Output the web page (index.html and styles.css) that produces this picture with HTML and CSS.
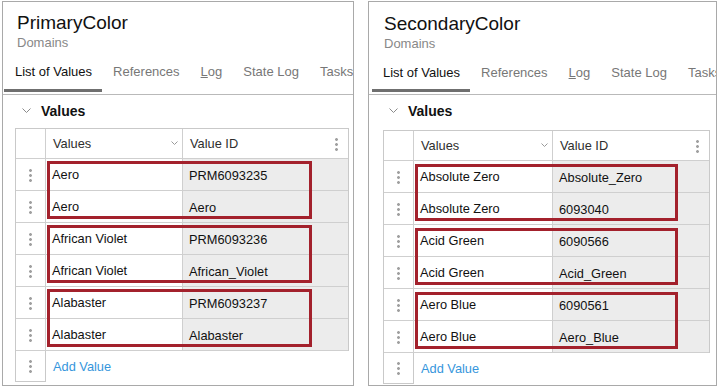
FILE: index.html
```html
<!DOCTYPE html>
<html>

<head>
  <meta charset="utf-8">
  <title>Domains</title>
  <link rel="stylesheet" href="styles.css">
</head>

<body>
  <!-- PrimaryColor domain -->
  <div class="panel primary">
    <div class="head">
      <div class="title">PrimaryColor</div>
      <div class="kind">Domains</div>
    </div>
    <div class="tabs">
      <div class="tab on">List of Values</div>
      <div class="tab">References</div>
      <div class="tab"><u>L</u>og</div>
      <div class="tab">State Log</div>
      <div class="tab">Tasks</div>
    </div>
    <div class="section">
      <svg class="chev" width="9" height="6" viewBox="0 0 9 6"><polyline points="0.5,0.5 4.5,4.5 8.5,0.5" fill="none" stroke="#8a8a8a" stroke-width="1"/></svg>
      <span>Values</span>
    </div>
    <div class="grid">
      <div class="row hdr">
        <div class="handle"></div>
        <div class="cell val">Values <svg class="sort" width="7" height="5" viewBox="0 0 7 5"><polyline points="0.5,0.5 3.5,3.5 6.5,0.5" fill="none" stroke="#9a9a9a" stroke-width="1"/></svg></div>
        <div class="cell idh">Value ID <span class="dots"></span></div>
      </div>
      <div class="group">
        <div class="row">
          <div class="handle"><span class="dots"></span></div>
          <div class="cell val">Aero</div>
          <div class="cell id">PRM6093235</div>
        </div>
        <div class="row">
          <div class="handle"><span class="dots"></span></div>
          <div class="cell val">Aero</div>
          <div class="cell id">Aero</div>
        </div>
        <div class="mark"></div>
      </div>
      <div class="group">
        <div class="row">
          <div class="handle"><span class="dots"></span></div>
          <div class="cell val">African Violet</div>
          <div class="cell id">PRM6093236</div>
        </div>
        <div class="row">
          <div class="handle"><span class="dots"></span></div>
          <div class="cell val">African Violet</div>
          <div class="cell id">African_Violet</div>
        </div>
        <div class="mark"></div>
      </div>
      <div class="group">
        <div class="row">
          <div class="handle"><span class="dots"></span></div>
          <div class="cell val">Alabaster</div>
          <div class="cell id">PRM6093237</div>
        </div>
        <div class="row">
          <div class="handle"><span class="dots"></span></div>
          <div class="cell val">Alabaster</div>
          <div class="cell id">Alabaster</div>
        </div>
        <div class="mark"></div>
      </div>
    </div>
    <div class="add">
      <div class="handle"><span class="dots"></span></div>
      <a class="addlink">Add Value</a>
    </div>
  </div>

  <!-- SecondaryColor domain -->
  <div class="panel secondary">
    <div class="head">
      <div class="title">SecondaryColor</div>
      <div class="kind">Domains</div>
    </div>
    <div class="tabs">
      <div class="tab on">List of Values</div>
      <div class="tab">References</div>
      <div class="tab"><u>L</u>og</div>
      <div class="tab">State Log</div>
      <div class="tab">Tasks</div>
    </div>
    <div class="section">
      <svg class="chev" width="9" height="6" viewBox="0 0 9 6"><polyline points="0.5,0.5 4.5,4.5 8.5,0.5" fill="none" stroke="#8a8a8a" stroke-width="1"/></svg>
      <span>Values</span>
    </div>
    <div class="grid">
      <div class="row hdr">
        <div class="handle"></div>
        <div class="cell val">Values <svg class="sort" width="7" height="5" viewBox="0 0 7 5"><polyline points="0.5,0.5 3.5,3.5 6.5,0.5" fill="none" stroke="#9a9a9a" stroke-width="1"/></svg></div>
        <div class="cell idh">Value ID <span class="dots"></span></div>
      </div>
      <div class="group">
        <div class="row">
          <div class="handle"><span class="dots"></span></div>
          <div class="cell val">Absolute Zero</div>
          <div class="cell id">Absolute_Zero</div>
        </div>
        <div class="row">
          <div class="handle"><span class="dots"></span></div>
          <div class="cell val">Absolute Zero</div>
          <div class="cell id">6093040</div>
        </div>
        <div class="mark"></div>
      </div>
      <div class="group">
        <div class="row">
          <div class="handle"><span class="dots"></span></div>
          <div class="cell val">Acid Green</div>
          <div class="cell id">6090566</div>
        </div>
        <div class="row">
          <div class="handle"><span class="dots"></span></div>
          <div class="cell val">Acid Green</div>
          <div class="cell id">Acid_Green</div>
        </div>
        <div class="mark"></div>
      </div>
      <div class="group">
        <div class="row">
          <div class="handle"><span class="dots"></span></div>
          <div class="cell val">Aero Blue</div>
          <div class="cell id">6090561</div>
        </div>
        <div class="row">
          <div class="handle"><span class="dots"></span></div>
          <div class="cell val">Aero Blue</div>
          <div class="cell id">Aero_Blue</div>
        </div>
        <div class="mark"></div>
      </div>
    </div>
    <div class="add">
      <div class="handle"><span class="dots"></span></div>
      <a class="addlink">Add Value</a>
    </div>
  </div>
</body>

</html>
```

FILE: styles.css
```css
body {
  margin: 1px 0 0 2px;
  display: flex;
  gap: 14px;
  font-family: 'Liberation Sans', Arial, sans-serif;
  background-color: #fff;
  color: #111;
}

/*///////////////////////////////////////////////////////////////////////////*/
.panel {
  box-sizing: border-box;
  width: 352px;
  height: 385px;
  border: 1px solid #a9a9a9;
  display: flex;
  flex-direction: column;
  overflow: hidden;
}

.head {
  padding: 9px 0 0 14px;
}

.title {
  font-size: 19px;
  line-height: 24px;
  color: #111;
}

.kind {
  font-size: 13px;
  line-height: 16px;
  color: #888;
}

.tabs {
  display: flex;
  margin-top: 13px;
  padding: 0 0 2px 1px;
  border-bottom: 1px solid #b9b9b9;
  white-space: nowrap;
  overflow: hidden;
}

.tab {
  flex: none;
  padding: 0 10px 9px 11px;
  font-size: 13px;
  line-height: 16px;
  color: #777;
  border-bottom: 3px solid transparent;
}

.tab u {
  text-decoration-color: #777;
}

.tab.on {
  color: #111;
  border-bottom-color: #6f6f6f;
}

.section {
  display: flex;
  align-items: center;
  padding: 7px 0 0 19px;
  height: 18px;
  font-size: 14px;
  font-weight: bold;
  color: #111;
}

.chev {
  margin-right: 10px;
}

/*///////////////////////////////////////////////////////////////////////////*/
.grid {
  margin: 8px 4px 0 12px;
  border: 1px solid #c9c9c9;
  border-bottom: none;
}

.row {
  box-sizing: border-box;
  display: grid;
  grid-template-columns: 30px 137px 1fr;
  height: 32px;
  border-bottom: 1px solid #cfcfcf;
}

.row.hdr {
  height: 30px;
}

.handle {
  box-sizing: border-box;
  display: flex;
  align-items: center;
  justify-content: center;
  border-right: 1px solid #cfcfcf;
}

.cell {
  display: flex;
  align-items: center;
  padding: 0 6px;
  font-size: 12.8px;
  white-space: nowrap;
  overflow: hidden;
}

.val {
  border-right: 1px solid #cfcfcf;
}

.hdr .cell {
  color: #2e2e2e;
  padding-left: 7px;
}

.sort {
  margin-left: auto;
  margin-right: -2px;
}

.idh {
  justify-content: space-between;
  padding-right: 10px;
}

.id {
  background-color: #ececec;
  padding-top: 2px;
}

.dots {
  display: inline-block;
  width: 3px;
  height: 14px;
  background-image: radial-gradient(circle at center, #a0a0a0 1.2px, transparent 1.6px);
  background-size: 3px 5px;
}

.group {
  position: relative;
}

.mark {
  position: absolute;
  left: 31px;
  top: 2px;
  width: 265px;
  height: 58px;
  box-sizing: border-box;
  border: 3px solid #a3212c;
  pointer-events: none;
}

.add {
  display: flex;
  align-items: center;
  margin-left: 12px;
  height: 31px;
}

.add .handle {
  width: 31px;
  height: 31px;
  border: 1px solid #c9c9c9;
  border-top: none;
}

.addlink {
  margin-left: 7px;
  font-size: 12.8px;
  color: #3696dc;
  cursor: pointer;
}

/*///////////////////////////////////////////////////////////////////////////*/
.secondary {
  width: 349px;
}

.secondary .head {
  padding: 10px 0 0 15px;
}

.secondary .tabs {
  padding-left: 3px;
}

.secondary .tab {
  padding-bottom: 8px;
}

.secondary .section {
  padding-left: 20px;
}

.secondary .grid {
  margin: 10px 6px 0 14px;
}

.secondary .row {
  grid-template-columns: 30px 139px 1fr;
}

.secondary .mark {
  top: 3px;
  width: 263px;
  height: 57px;
}

.secondary .add {
  margin-left: 14px;
}
```
